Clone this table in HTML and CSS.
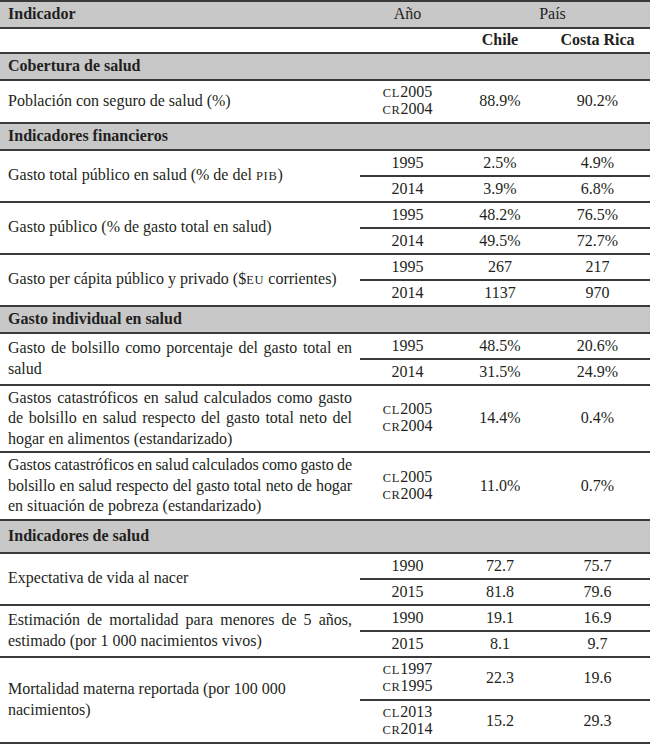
FILE: index.html
```html
<!DOCTYPE html>
<html lang="es">
<head>
<meta charset="utf-8">
<title>Indicadores de salud Chile y Costa Rica</title>
<link rel="stylesheet" href="styles.css">
</head>
<body>
<table class="t">
  <colgroup>
    <col class="c-ind"><col class="c-yr"><col class="c-cl"><col class="c-cr">
  </colgroup>
  <thead>
    <tr class="gray">
      <th class="ind">Indicador</th>
      <th class="light">Año</th>
      <th class="light" colspan="2">País</th>
    </tr>
    <tr class="h2">
      <th></th><th></th><th>Chile</th><th>Costa Rica</th>
    </tr>
  </thead>
  <tbody>
    <tr class="group"><td colspan="4">Cobertura de salud</td></tr>
    <tr class="two">
      <td class="ind">Población con seguro de salud (%)</td>
      <td class="yr2"><span class="sc">CL</span>2005<br><span class="sc">CR</span>2004</td>
      <td>88.9%</td><td>90.2%</td>
    </tr>

    <tr class="group"><td colspan="4">Indicadores financieros</td></tr>
    <tr>
      <td class="ind" rowspan="2">Gasto total público en salud (% de del <span class="sc">PIB</span>)</td>
      <td>1995</td><td>2.5%</td><td>4.9%</td>
    </tr>
    <tr><td>2014</td><td>3.9%</td><td>6.8%</td></tr>
    <tr>
      <td class="ind" rowspan="2">Gasto público (% de gasto total en salud)</td>
      <td>1995</td><td>48.2%</td><td>76.5%</td>
    </tr>
    <tr><td>2014</td><td>49.5%</td><td>72.7%</td></tr>
    <tr>
      <td class="ind" rowspan="2">Gasto per cápita público y privado ($<span class="sc">EU</span> corrientes)</td>
      <td>1995</td><td>267</td><td>217</td>
    </tr>
    <tr><td>2014</td><td>1137</td><td>970</td></tr>

    <tr class="group"><td colspan="4">Gasto individual en salud</td></tr>
    <tr>
      <td class="ind" rowspan="2"><span class="ln jl">Gasto de bolsillo como porcentaje del gasto total en</span><span class="ln">salud</span></td>
      <td>1995</td><td>48.5%</td><td>20.6%</td>
    </tr>
    <tr><td>2014</td><td>31.5%</td><td>24.9%</td></tr>
    <tr class="three">
      <td class="ind"><span class="ln jl">Gastos catastróficos en salud calculados como gasto</span><span class="ln jl">de bolsillo en salud respecto del gasto total neto del</span><span class="ln">hogar en alimentos (estandarizado)</span></td>
      <td class="yr2"><span class="sc">CL</span>2005<br><span class="sc">CR</span>2004</td>
      <td>14.4%</td><td>0.4%</td>
    </tr>
    <tr class="three">
      <td class="ind"><span class="ln jl tight">Gastos catastróficos en salud calculados como gasto de</span><span class="ln jl tight">bolsillo en salud respecto del gasto total neto de hogar</span><span class="ln">en situación de pobreza (estandarizado)</span></td>
      <td class="yr2"><span class="sc">CL</span>2005<br><span class="sc">CR</span>2004</td>
      <td>11.0%</td><td>0.7%</td>
    </tr>

    <tr class="group tall"><td colspan="4">Indicadores de salud</td></tr>
    <tr>
      <td class="ind" rowspan="2">Expectativa de vida al nacer</td>
      <td>1990</td><td>72.7</td><td>75.7</td>
    </tr>
    <tr><td>2015</td><td>81.8</td><td>79.6</td></tr>
    <tr>
      <td class="ind" rowspan="2"><span class="ln jl">Estimación de mortalidad para menores de 5 años,</span><span class="ln">estimado (por 1 000 nacimientos vivos)</span></td>
      <td>1990</td><td>19.1</td><td>16.9</td>
    </tr>
    <tr><td>2015</td><td>8.1</td><td>9.7</td></tr>
    <tr class="two">
      <td class="ind" rowspan="2"><span class="ln">Mortalidad materna reportada (por 100 000</span><span class="ln">nacimientos)</span></td>
      <td class="yr2"><span class="sc">CL</span>1997<br><span class="sc">CR</span>1995</td>
      <td>22.3</td><td>19.6</td>
    </tr>
    <tr class="two">
      <td class="yr2"><span class="sc">CL</span>2013<br><span class="sc">CR</span>2014</td>
      <td>15.2</td><td>29.3</td>
    </tr>
  </tbody>
</table>
</body>
</html>
```

FILE: styles.css
```css
html, body {
  margin: 0;
  padding: 0;
  background: #ffffff;
}

.t {
  width: 650px;
  table-layout: fixed;
  border-collapse: collapse;
  border-top: 2px solid #3a3a3a;
  font-family: "Liberation Serif", "Times New Roman", serif;
  font-size: 16px;
  color: #231f20;
}

.c-ind { width: 360px; }
.c-yr { width: 95px; }
.c-cl { width: 90px; }
.c-cr { width: 105px; }

.t th,
.t td {
  padding: 2px 8px;
  line-height: 20px;
  text-align: center;
  vertical-align: middle;
  border-bottom: 2px solid #3a3a3a;
}

.t th {
  font-weight: bold;
}

.t th.light {
  font-weight: normal;
}

.t .gray th {
  background: #c8c8c8;
  padding-top: 2px;
  padding-bottom: 2px;
}

.t .h2 th {
  padding-top: 1.5px;
  padding-bottom: 1.5px;
}

.t th.ind,
.t td.ind {
  text-align: left;
  padding-right: 8px;
  line-height: 20.5px;
}

.ln {
  display: block;
  white-space: nowrap;
}

.ln.jl {
  text-align: justify;
  text-align-last: justify;
}

.ln.tight {
  word-spacing: -1.5px;
  letter-spacing: -0.1px;
}

.t .group td {
  background: #c8c8c8;
  font-weight: bold;
  text-align: left;
  padding-top: 2.5px;
  padding-bottom: 2.5px;
}

.t .group.tall td {
  padding-top: 5.5px;
  padding-bottom: 5.5px;
}

.t td.yr2 {
  line-height: 16px;
}

.t .two td {
  padding-top: 3.5px;
  padding-bottom: 3.5px;
}

.t .three td {
  padding-top: 2px;
  padding-bottom: 2px;
}

.sc {
  font-size: 0.78em;
  letter-spacing: 0.06em;
}
```
